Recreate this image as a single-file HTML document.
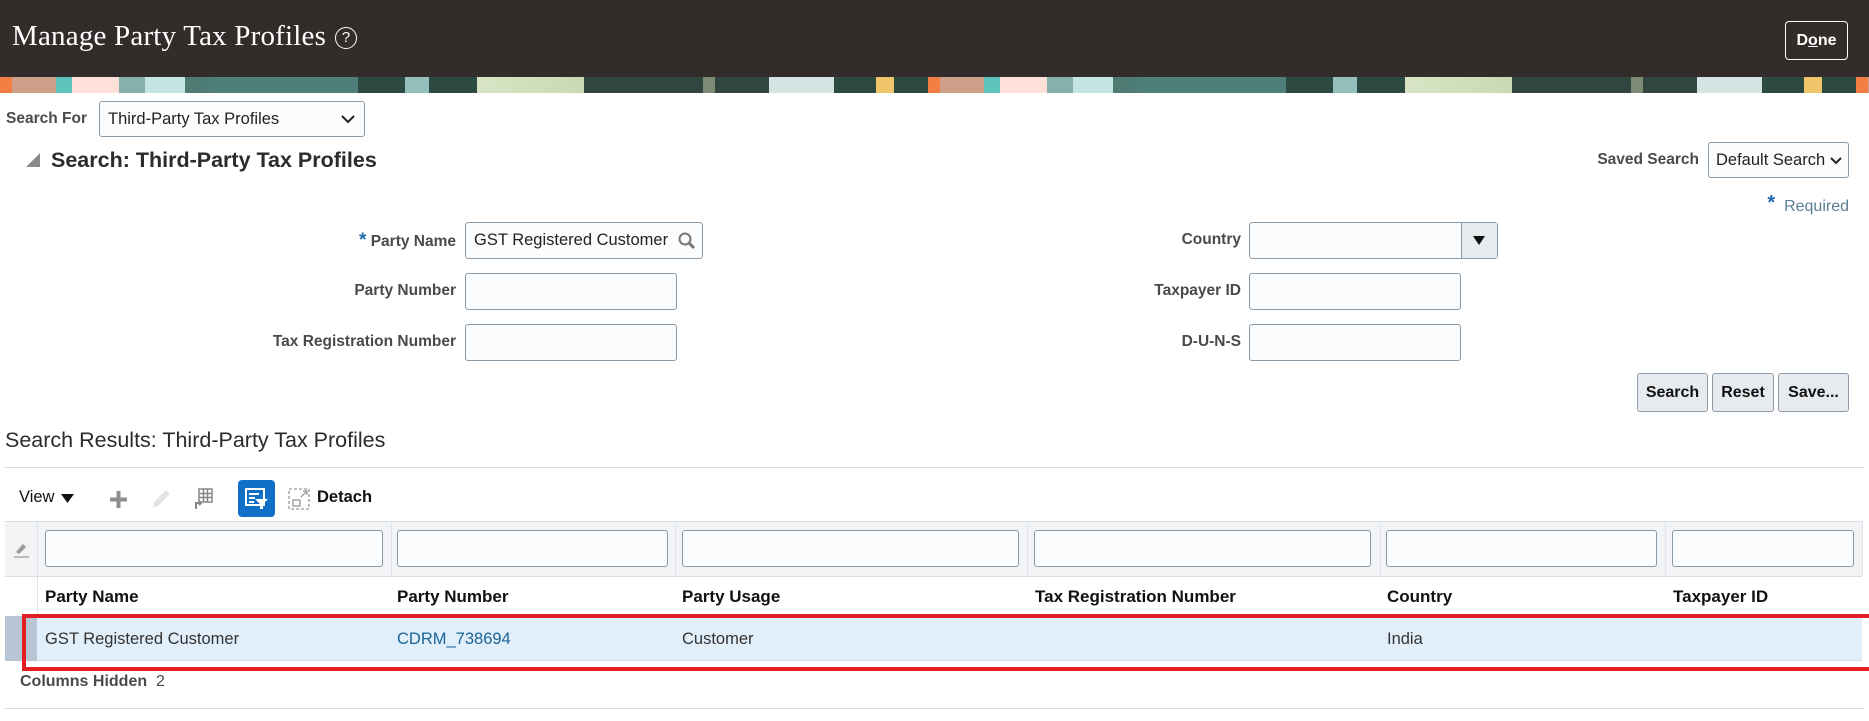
<!DOCTYPE html>
<html><head><meta charset="utf-8"><style>
*{box-sizing:border-box;margin:0;padding:0}
body{width:1869px;height:721px;overflow:hidden;background:#fff;font-family:"Liberation Sans",Arial,sans-serif;position:relative;color:#333}
.a{position:absolute}
.hdr{left:0;top:0;width:1869px;height:77px;background:#322d2a}
.ban{left:0;top:77px;width:1869px;height:16px;background-size:928px 16px;background-repeat:repeat-x;
background-image:linear-gradient(90deg,#f47f45 0,#f47f45 12px,#cfa089 12px,#cfa089 56px,#5cc4bc 56px,#5cc4bc 72px,#fde1d8 72px,#fde1d8 119px,#85b0ae 119px,#85b0ae 145px,#c5e4e4 145px,#c5e4e4 185px,#4e7a70 185px,#4f7f7a 220px,#4f7f7a 358px,#2d4a42 358px,#2d4a42 405px,#93bfbd 405px,#93bfbd 429px,#2d4a42 429px,#2d4a42 477px,#d8e5c4 477px,#c9d8b5 584px,#30463f 584px,#30463f 703px,#7d8a74 703px,#7d8a74 715px,#30463f 715px,#30463f 769px,#d5e3e3 769px,#d5e3e3 834px,#2d4a42 834px,#2d4a42 876px,#f0c468 876px,#f0c468 894px,#2d4a42 894px,#2d4a42 928px)}
.title{left:12px;top:20px;font-family:"Liberation Serif",serif;font-size:29px;color:#fff;letter-spacing:0.2px}
.help{left:335px;top:27px;width:22px;height:22px;border:1.5px solid #fff;border-radius:50%;color:#fff;font-size:15px;text-align:center;line-height:19px}
.done{left:1785px;top:21px;width:63px;height:39px;border:1px solid #fff;border-radius:4px;color:#fff;font-weight:bold;font-size:16px;text-align:center;line-height:37px}
.lbl{font-weight:bold;font-size:15.5px;color:#4a4a4a;text-align:right}
.inp{background:#fbfcfe;border:1px solid #8a9aa6;border-radius:3px;font-size:16.5px;color:#222;padding-left:8px}
.btn{background:#e8ebee;border:1px solid #8f9ba6;border-radius:3px;font-weight:bold;font-size:16px;color:#111;text-align:center;line-height:37px}
.th{font-weight:bold;font-size:17px;color:#111;top:587px}
.td{font-size:16.5px;color:#333;top:630px}
</style></head><body>
<div class="a hdr"></div>
<div class="a ban"></div>
<div class="a title">Manage Party Tax Profiles</div>
<div class="a help">?</div>
<div class="a done">D<u>o</u>ne</div>

<div class="a lbl" style="left:6px;top:110px;text-align:left">Search For</div>
<div class="a inp" style="left:99px;top:101px;width:266px;height:36px;line-height:34px">Third-Party Tax Profiles
<svg class="a" style="right:9px;top:13px" width="14" height="9"><path d="M1 1 L7 7 L13 1" stroke="#222" stroke-width="2" fill="none"/></svg></div>

<svg class="a" style="left:26px;top:153px" width="14" height="14"><path d="M14 0 L14 14 L0 14 Z" fill="#8a8a8a"/></svg>
<div class="a" style="left:51px;top:148px;font-weight:bold;font-size:21.5px;color:#2b2b2b">Search: Third-Party Tax Profiles</div>

<div class="a lbl" style="left:1560px;top:151px;width:139px">Saved Search</div>
<div class="a inp" style="left:1708px;top:142px;width:141px;height:36px;line-height:34px;padding-left:7px">Default Search
<svg class="a" style="right:6px;top:14px" width="12" height="8"><path d="M1 1 L6 6 L11 1" stroke="#222" stroke-width="2" fill="none"/></svg></div>
<div class="a" style="left:1760px;top:192px;width:89px;text-align:right;font-size:16px;color:#5b7f95"><span style="color:#1f6bb0;font-weight:bold;font-size:20px;vertical-align:2px">*</span>&nbsp; Required</div>

<div class="a lbl" style="left:200px;top:230px;width:256px"><span style="color:#1f6bb0;font-size:19px">*</span> Party Name</div>
<div class="a inp" style="left:465px;top:222px;width:238px;height:37px;line-height:35px">GST Registered Customer
<svg class="a" style="right:6px;top:9px" width="18" height="18"><circle cx="7" cy="7" r="5.5" stroke="#777" stroke-width="2" fill="none"/><path d="M11 11 L16 16" stroke="#777" stroke-width="3"/></svg></div>
<div class="a lbl" style="left:200px;top:282px;width:256px">Party Number</div>
<div class="a inp" style="left:465px;top:273px;width:212px;height:37px"></div>
<div class="a lbl" style="left:200px;top:333px;width:256px">Tax Registration Number</div>
<div class="a inp" style="left:465px;top:324px;width:212px;height:37px"></div>

<div class="a lbl" style="left:1100px;top:231px;width:141px">Country</div>
<div class="a inp" style="left:1249px;top:222px;width:249px;height:37px;padding:0">
<div class="a" style="left:211px;top:0;width:36px;height:35px;background:#e8ebee;border-left:1px solid #8a9aa6"></div>
<svg class="a" style="left:223px;top:13px" width="12" height="10"><path d="M0 0 L12 0 L6 9Z" fill="#111"/></svg></div>
<div class="a lbl" style="left:1100px;top:282px;width:141px">Taxpayer ID</div>
<div class="a inp" style="left:1249px;top:273px;width:212px;height:37px"></div>
<div class="a lbl" style="left:1100px;top:333px;width:141px">D-U-N-S</div>
<div class="a inp" style="left:1249px;top:324px;width:212px;height:37px"></div>

<div class="a btn" style="left:1637px;top:373px;width:71px;height:39px">Search</div>
<div class="a btn" style="left:1712px;top:373px;width:62px;height:39px">Reset</div>
<div class="a btn" style="left:1778px;top:373px;width:71px;height:39px">Save...</div>

<div class="a" style="left:5px;top:428px;font-size:21.5px;color:#2b2b2b">Search Results: Third-Party Tax Profiles</div>
<div class="a" style="left:4px;top:467px;width:1860px;height:1px;background:#d6dde3"></div>

<div class="a" style="left:19px;top:488px;font-size:16.5px;color:#111">View</div>
<svg class="a" style="left:61px;top:494px" width="13" height="10"><path d="M0 0 L13 0 L6.5 9Z" fill="#111"/></svg>
<svg class="a" style="left:109px;top:490px" width="19" height="19"><path d="M9.5 1 V18 M1 9.5 H18" stroke="#8e8e8e" stroke-width="4"/></svg>
<svg class="a" style="left:150px;top:488px" width="22" height="22"><path d="M3 19 L4 14 L16 2 L20 6 L8 18 Z" fill="#e3e3e3"/></svg>
<svg class="a" style="left:192px;top:488px" width="22" height="22" fill="none" stroke="#888" stroke-width="1.5"><rect x="7" y="1" width="13" height="13"/><path d="M7 5.5H20M7 9.5H20M11.5 1V14M15.5 1V14"/><path d="M4 21 V15 H9 M7 13 L9 15 L7 17" stroke-width="2"/></svg>
<div class="a" style="left:238px;top:480px;width:37px;height:37px;background:#1070c8;border-radius:4px"></div>
<svg class="a" style="left:245px;top:488px" width="24" height="22" fill="none" stroke="#fff" stroke-width="2"><rect x="1" y="1" width="18" height="16"/><path d="M4 6H14M4 10H10M4 14H9"/><path d="M10 11 H23 L18 16 V21 L15 21 V16 Z" fill="#fff" stroke="none"/></svg>
<svg class="a" style="left:288px;top:488px" width="22" height="22" fill="none" stroke="#999" stroke-width="1.3" stroke-dasharray="3 2"><rect x="1" y="1" width="20" height="20"/><path d="M13 9 L19 3 M15 3 H19 V7" stroke-dasharray="none"/><rect x="5" y="12" width="7" height="6" stroke-dasharray="none"/></svg>
<div class="a" style="left:317px;top:488px;font-weight:bold;font-size:16.5px;color:#111">Detach</div>

<div class="a" style="left:5px;top:521px;width:1857px;height:56px;background:#f1f3f5;border-top:1px solid #d6dde3;border-bottom:1px solid #d6dde3"></div>
<div class="a" style="left:37px;top:521px;width:1px;height:95px;background:#dde3e8"></div>
<div class="a" style="left:391px;top:521px;width:1px;height:55px;background:#dde3e8"></div>
<div class="a" style="left:675px;top:521px;width:1px;height:55px;background:#dde3e8"></div>
<div class="a" style="left:1027px;top:521px;width:1px;height:55px;background:#dde3e8"></div>
<div class="a" style="left:1380px;top:521px;width:1px;height:55px;background:#dde3e8"></div>
<div class="a" style="left:1665px;top:521px;width:1px;height:55px;background:#dde3e8"></div>
<div class="a" style="left:1862px;top:521px;width:1px;height:55px;background:#dde3e8"></div>
<svg class="a" style="left:13px;top:541px" width="18" height="18"><path d="M3 11 L10 3 L13 6 L6 13 Z" fill="#9a9a9a"/><path d="M1 16 H16" stroke="#aaa" stroke-width="1.5"/></svg>
<div class="a inp" style="left:45px;top:530px;width:338px;height:37px"></div>
<div class="a inp" style="left:397px;top:530px;width:271px;height:37px"></div>
<div class="a inp" style="left:682px;top:530px;width:337px;height:37px"></div>
<div class="a inp" style="left:1034px;top:530px;width:337px;height:37px"></div>
<div class="a inp" style="left:1386px;top:530px;width:271px;height:37px"></div>
<div class="a inp" style="left:1672px;top:530px;width:182px;height:37px"></div>

<div class="a th" style="left:45px">Party Name</div>
<div class="a th" style="left:397px">Party Number</div>
<div class="a th" style="left:682px">Party Usage</div>
<div class="a th" style="left:1035px">Tax Registration Number</div>
<div class="a th" style="left:1387px">Country</div>
<div class="a th" style="left:1673px">Taxpayer ID</div>

<div class="a" style="left:5px;top:616px;width:1857px;height:45px;background:#e1effb;border-bottom:1px solid #d0dbe4"></div>
<div class="a" style="left:5px;top:616px;width:32px;height:45px;background:#b6c6d4"></div>
<div class="a td" style="left:45px">GST Registered Customer</div>
<div class="a td" style="left:397px;color:#1a6496">CDRM_738694</div>
<div class="a td" style="left:682px">Customer</div>
<div class="a td" style="left:1387px">India</div>

<div class="a" style="left:22px;top:614px;width:1860px;height:57px;border:4px solid #e31e24"></div>

<div class="a" style="left:20px;top:673px;font-size:16px;color:#4a4a4a"><b>Columns Hidden</b>&nbsp; 2</div>
<div class="a" style="left:4px;top:708px;width:1860px;height:1px;background:#d6dde3"></div>
</body></html>
